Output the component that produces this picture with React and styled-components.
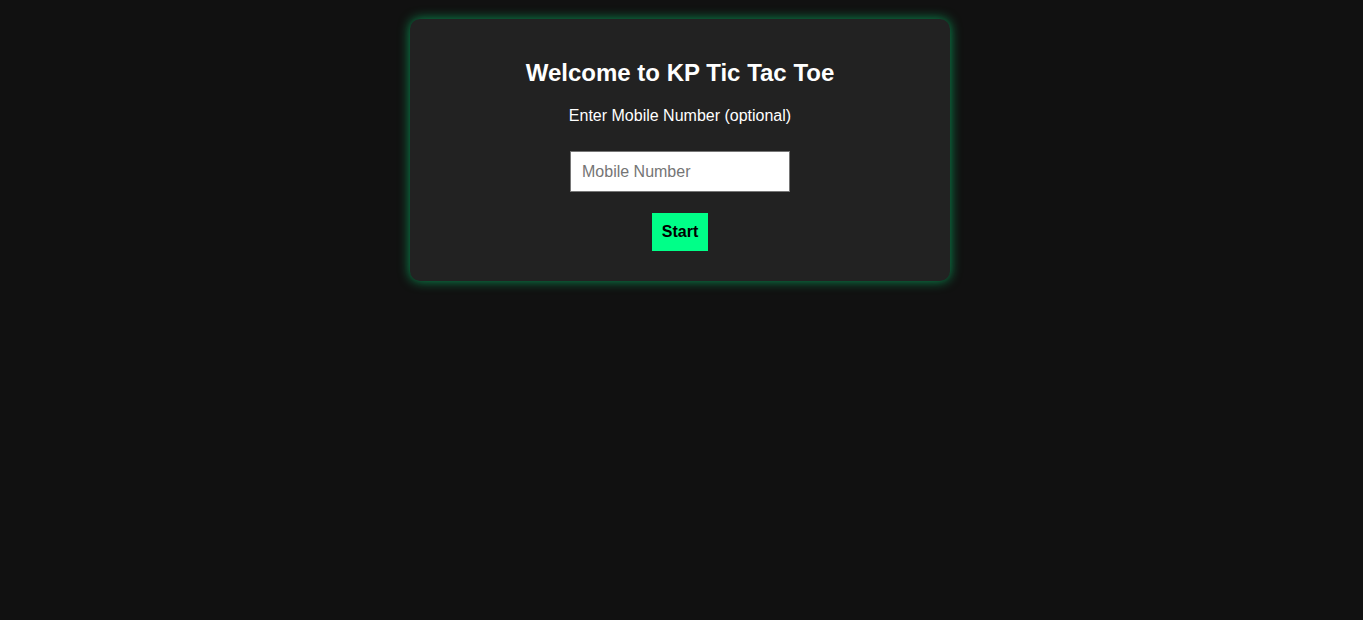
import React, { useState } from 'react'
import styled, { createGlobalStyle } from 'styled-components'

const Global = createGlobalStyle`
  html, body {
    margin: 0;
    background: #111;
    color: #fff;
    font-family: "Liberation Sans", Arial, sans-serif;
  }
`

export default function App() {
  const [mobile, setMobile] = useState('')

  return (
    <Pagina>
      <Global />
      <Tarjeta>
        <Titulo>Welcome to KP Tic Tac Toe</Titulo>
        <Texto>Enter Mobile Number (optional)</Texto>
        <Campo
          type="text"
          placeholder="Mobile Number"
          value={mobile}
          onChange={(e) => setMobile(e.target.value)}
        />
        <Boton>Start</Boton>
      </Tarjeta>
    </Pagina>
  )
}

const Pagina = styled.div`
  min-height: 620px;
  padding: 19px 3px 0 0;
  box-sizing: border-box;
`

const Tarjeta = styled.div`
  width: 500px;
  margin: 0 auto;
  padding: 20px;
  background: #222;
  border-radius: 10px;
  box-shadow: 0 0 12px rgba(0, 255, 136, 0.55);
  text-align: center;
`

const Titulo = styled.h2`
  font-size: 24px;
  margin: 20px 0;
  color: #fff;
`

const Texto = styled.p`
  font-size: 16px;
  margin: 20px 0 0;
`

const Campo = styled.input`
  display: block;
  margin: 26px auto 0;
  width: 220px;
  height: 41px;
  box-sizing: border-box;
  padding: 10px 11px;
  font-size: 16px;
  font-family: "Liberation Sans", Arial, sans-serif;
  border: 1px solid #767676;
  outline: none;

  &::placeholder {
    color: #757575;
  }
`

const Boton = styled.button`
  display: block;
  margin: 21px auto 10px;
  padding: 10px;
  font-size: 16px;
  font-weight: bold;
  font-family: "Liberation Sans", Arial, sans-serif;
  background: #00ff88;
  color: #000;
  border: none;
  cursor: pointer;
`
